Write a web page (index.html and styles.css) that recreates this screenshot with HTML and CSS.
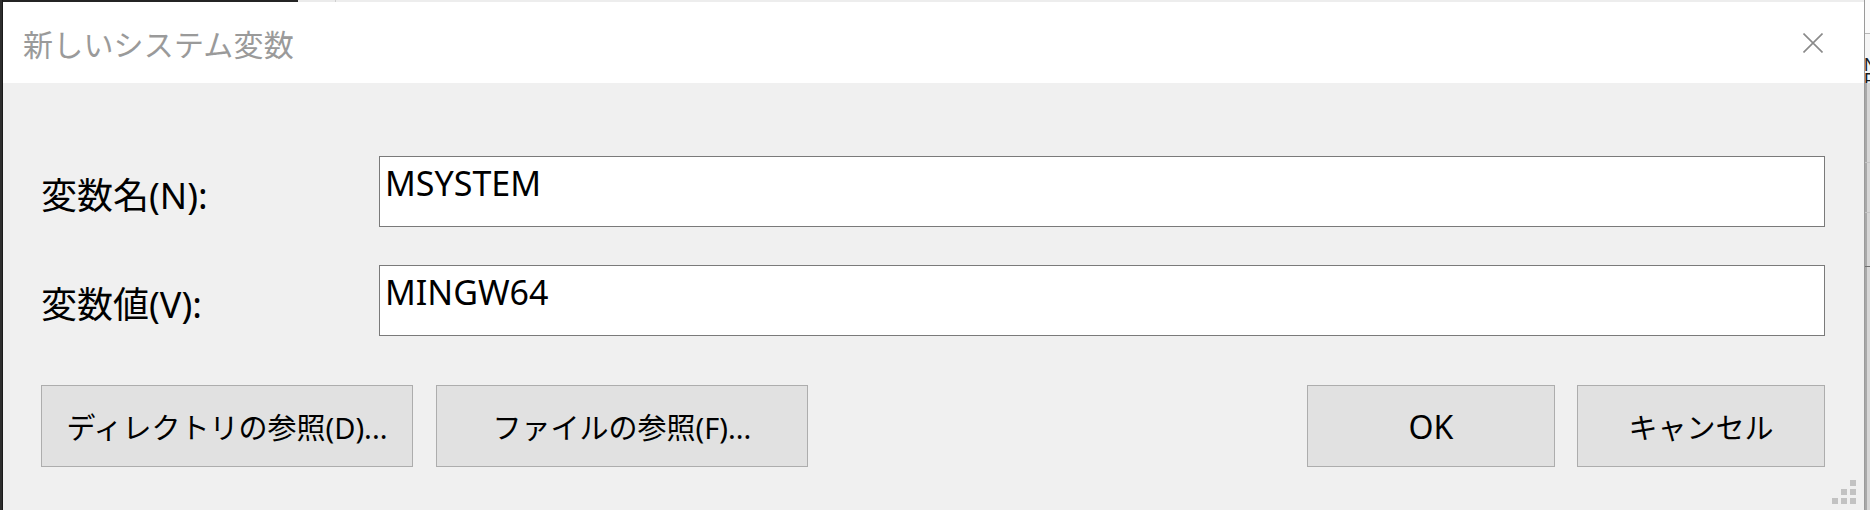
FILE: index.html
```html
<!DOCTYPE html>
<html lang="ja">
<head>
<meta charset="utf-8">
<title>新しいシステム変数</title>
<link rel="stylesheet" href="styles.css">
</head>
<body>
<div class="desktop">
  <div class="edge-left"></div>
  <div class="center">
    <div class="top-strip">
      <div class="ts-dark"></div>
      <div class="ts-light"></div>
      <div class="ts-light2"></div>
    </div>
    <div class="window">
      <div class="titlebar">
        <span class="title">新しいシステム変数</span>
        <span class="close" aria-label="閉じる">
          <svg width="20" height="20" viewBox="0 0 20 20"><path d="M0.5 0.5 L19.5 19.5 M19.5 0.5 L0.5 19.5" stroke="#8a8a8a" stroke-width="1.6" fill="none"/></svg>
        </span>
      </div>
      <div class="content">
        <div class="fields">
          <label class="lbl">変数名(N):</label>
          <div class="input">MSYSTEM</div>
          <label class="lbl">変数値(V):</label>
          <div class="input">MINGW64</div>
        </div>
        <div class="buttons">
          <div class="group">
            <button class="btn btn-wide">ディレクトリの参照(D)...</button>
            <button class="btn btn-wide">ファイルの参照(F)...</button>
          </div>
          <div class="group group-right">
            <button class="btn btn-std btn-ok">OK</button>
            <button class="btn btn-std">キャンセル</button>
          </div>
        </div>
        <div class="grip">
          <i class="g3"></i>
          <i class="g2"></i><i class="g3"></i>
          <i class="g1"></i><i class="g2"></i><i class="g3"></i>
        </div>
      </div>
    </div>
  </div>
  <div class="edge-right">
    <div class="re-top"></div>
    <div class="re-line"></div>
    <div class="re-text">N<br>F</div>
    <div class="re-bar">
      <div class="re-seg s1"></div>
      <div class="re-seg s2"></div>
      <div class="re-seg s3"></div>
      <div class="re-seg s4"></div>
    </div>
  </div>
</div>
</body>
</html>
```

FILE: styles.css
```css
* { box-sizing: border-box; }
html, body {
  margin: 0;
  padding: 0;
  width: 1870px;
  height: 510px;
  overflow: hidden;
  background: #f0f0f0;
  font-family: "Noto Sans", "Noto Sans CJK JP", sans-serif;
}
.desktop {
  display: flex;
  width: 1870px;
  height: 510px;
}
.edge-left {
  width: 3px;
  background: #2e2e2e;
  border-right: 1px solid #1a1a1a;
}
.center {
  flex: 1;
  display: flex;
  flex-direction: column;
  min-width: 0;
}
.top-strip {
  height: 2px;
  display: flex;
}
.ts-dark { width: 295px; background: #242424; }
.ts-light { width: 38px; background: #ebebeb; border-right: 1px solid #cfcfcf; }
.ts-light2 { flex: 1; background: #ededed; }
.window {
  flex: 1;
  display: flex;
  flex-direction: column;
}
.titlebar {
  height: 81px;
  background: #ffffff;
  display: flex;
  align-items: center;
  justify-content: space-between;
  padding: 0 41px 0 20px;
}
.title {
  font-family: "Noto Sans CJK JP", sans-serif;
  font-size: 30px;
  color: #9a9a9a;
  letter-spacing: 0.2px;
}
.close {
  display: flex;
  width: 20px;
  height: 20px;
}
.content {
  position: relative;
  flex: 1;
  background: #f0f0f0;
  padding: 73px 39px 0 38px;
}
.fields {
  display: grid;
  grid-template-columns: 338px 1fr;
  grid-auto-rows: 71px;
  row-gap: 38px;
  align-items: center;
}
.lbl {
  font-size: 36px;
  color: #000;
  padding-top: 4px;
}
.input {
  height: 71px;
  background: #fff;
  border: 1px solid #7a7a7a;
  padding: 3px 5px;
  font-size: 34px;
  color: #000;
  line-height: normal;
  align-self: stretch;
}
.buttons {
  margin-top: 49px;
  display: flex;
  justify-content: space-between;
}
.group {
  display: flex;
  gap: 23px;
}
.group-right { gap: 22px; }
.btn {
  height: 82px;
  background: #e1e1e1;
  border: 1px solid #adadad;
  font-family: "Noto Sans", "Noto Sans CJK JP", sans-serif;
  font-size: 29px;
  color: #000;
  padding: 0;
  display: flex;
  align-items: center;
  justify-content: center;
}
.btn-ok { font-size: 32px; }
.btn-wide { width: 372px; }
.btn-std { width: 248px; }
.grip {
  position: absolute;
  right: 8px;
  bottom: 6px;
  display: grid;
  grid-template-columns: repeat(3, 6px);
  grid-template-rows: repeat(3, 6px);
  gap: 3px;
}
.grip i { display: block; background: #c2c2c2; }
.grip .g1 { grid-column: 1; }
.grip .g2 { grid-column: 2; }
.grip .g3 { grid-column: 3; }
.edge-right {
  width: 6px;
  display: flex;
  flex-direction: column;
  overflow: hidden;
  background: #f5f5f5;
  border-left: 1px solid #9a9a9a;
}
.re-top { height: 33px; background: #fafafa; }
.re-line { height: 1px; background: #b8b8b8; }
.re-text {
  height: 49px;
  padding-top: 24px;
  font-family: "Liberation Sans", sans-serif;
  font-size: 18px;
  line-height: 15px;
  color: #1a1a1a;
  white-space: nowrap;
  margin-left: -1px;
}
.re-bar {
  flex: 1;
  display: flex;
  flex-direction: column;
  background: linear-gradient(to right, #a8a8a8 0, #a8a8a8 2px, #d6d6d6 2px, #d6d6d6 100%);
}
.re-seg { border-bottom: 1px solid #c4c4c4; }
.re-seg.s1 { height: 80px; }
.re-seg.s2 { height: 50px; }
.re-seg.s3 { height: 54px; border-bottom-color: #6e6e6e; }
.re-seg.s4 { flex: 1; border-bottom: 0; }
```
